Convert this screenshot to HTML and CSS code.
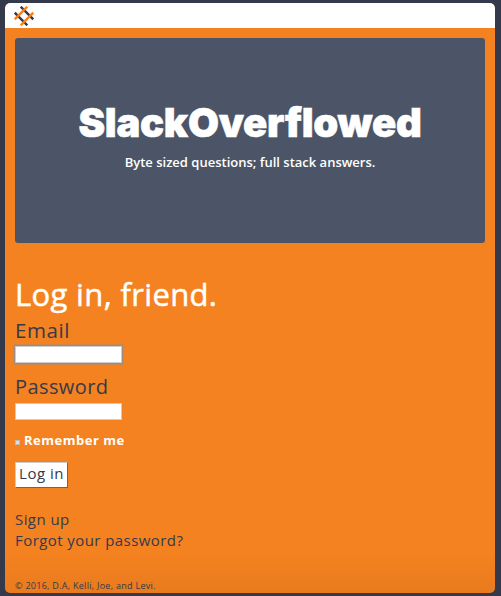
FILE: index.html
```html
<!DOCTYPE html>
<html lang="en">
<head>
<meta charset="utf-8">
<title>SlackOverflowed</title>
<link rel="stylesheet" href="styles.css">
</head>
<body>
<div class="page">
  <header class="topbar">
    <svg class="logo" viewBox="0 0 20 20" aria-hidden="true">
      <g fill="none" stroke-width="2.4">
        <path class="dark" d="M0.7 6.7L13.3 19.3M6.7 .7L19.3 13.3"/>
        <path class="orange" d="M.7 13.3L13.3 .7M6.7 19.3L19.3 6.7"/>
      </g>
    </svg>
  </header>
  <section class="hero">
    <h1>SlackOverflowed</h1>
    <p>Byte sized questions; full stack answers.</p>
  </section>
  <main>
    <h2>Log in, friend.</h2>
    <form>
      <label class="field-label email" for="email">Email</label>
      <input class="field focused" id="email" type="text">
      <label class="field-label second" for="password">Password</label>
      <input class="field" id="password" type="password">
      <div class="remember"><i class="check"></i><span>Remember me</span></div>
      <button type="button">Log in</button>
    </form>
    <nav><a>Sign up</a><a>Forgot your password?</a></nav>
  </main>
  <footer>© 2016, D.A, Kelli, Joe, and Levi.</footer>
</div>
</body>
</html>
```
FILE: styles.css
```css
* { box-sizing: border-box; }
body {
  margin: 0;
  padding: 3px 6px 3px 5px;
  height: 596px;
  overflow: hidden;
  background: #343a4b;
  color: #343a4b;
  font-family: "Open Sans", sans-serif;
}
.page {
  height: 590px;
  border-radius: 5px;
  overflow: hidden;
  background: linear-gradient(#f58220 0, #f58220 548px, #e97b1e 590px);
}
.topbar { height: 25px; padding: 3px 9px; background: #fff; border-radius: 5px 5px 0 0; }
.logo { display: block; width: 20px; height: 20px; }
.dark { stroke: #343a4b; }
.orange { stroke: #f58220; }
.hero {
  height: 205px;
  margin: 10px 10px 0;
  padding-top: 61px;
  border-radius: 3px;
  background: #4b5567;
  color: #fff;
  text-align: center;
}
h1, h2, p { margin: 0; }
h1 { font: 900 40px/48px Inter, sans-serif; letter-spacing: -.25px; -webkit-text-stroke: .6px #fff; }
.hero p { font-weight: 600; font-size: 13px; line-height: 30px; }
main { padding: 32px 10px 0; }
h2 { color: #fff; font-weight: 400; font-size: 31px; line-height: 39px; letter-spacing: .35px; -webkit-text-stroke: .5px #fff; }
form { display: flex; flex-direction: column; align-items: flex-start; }
.field-label { font-size: 20px; line-height: 26px; height: 32px; padding-top: 3px; letter-spacing: .4px; }
.field-label.email { font-size: 20.5px; letter-spacing: .6px; }
.field-label.second { margin-top: 8px; }
.field { width: 107px; height: 17px; border: 1px solid #ccc; background: #fff; padding: 0; outline: none; border-radius: 0; }
.field.focused { box-shadow: 0 0 0 1.5px #9d8c82; }
.remember { display: flex; height: 20px; margin-top: 11px; color: #fff; font-size: 13px; font-weight: 700; line-height: 18px; letter-spacing: .5px; }
.check { width: 5px; height: 5px; margin: 9px 4px 0 0; background: #ddd; border: 1px solid #bbb; }
button { width: 53px; height: 26px; margin-top: 11px; padding: 0 0 4px; background: #fff; border: 1px solid; border-color: #ccc #666 #666 #ccc; color: #343a4b; font: 15px/20px "Open Sans", sans-serif; letter-spacing: .5px; }
nav { display: flex; flex-direction: column; align-items: flex-start; margin-top: 21px; font-size: 15px; line-height: 21px; letter-spacing: .43px; }
footer { margin-top: 29px; padding-left: 10px; font-size: 9px; line-height: 12px; letter-spacing: .28px; }
```
